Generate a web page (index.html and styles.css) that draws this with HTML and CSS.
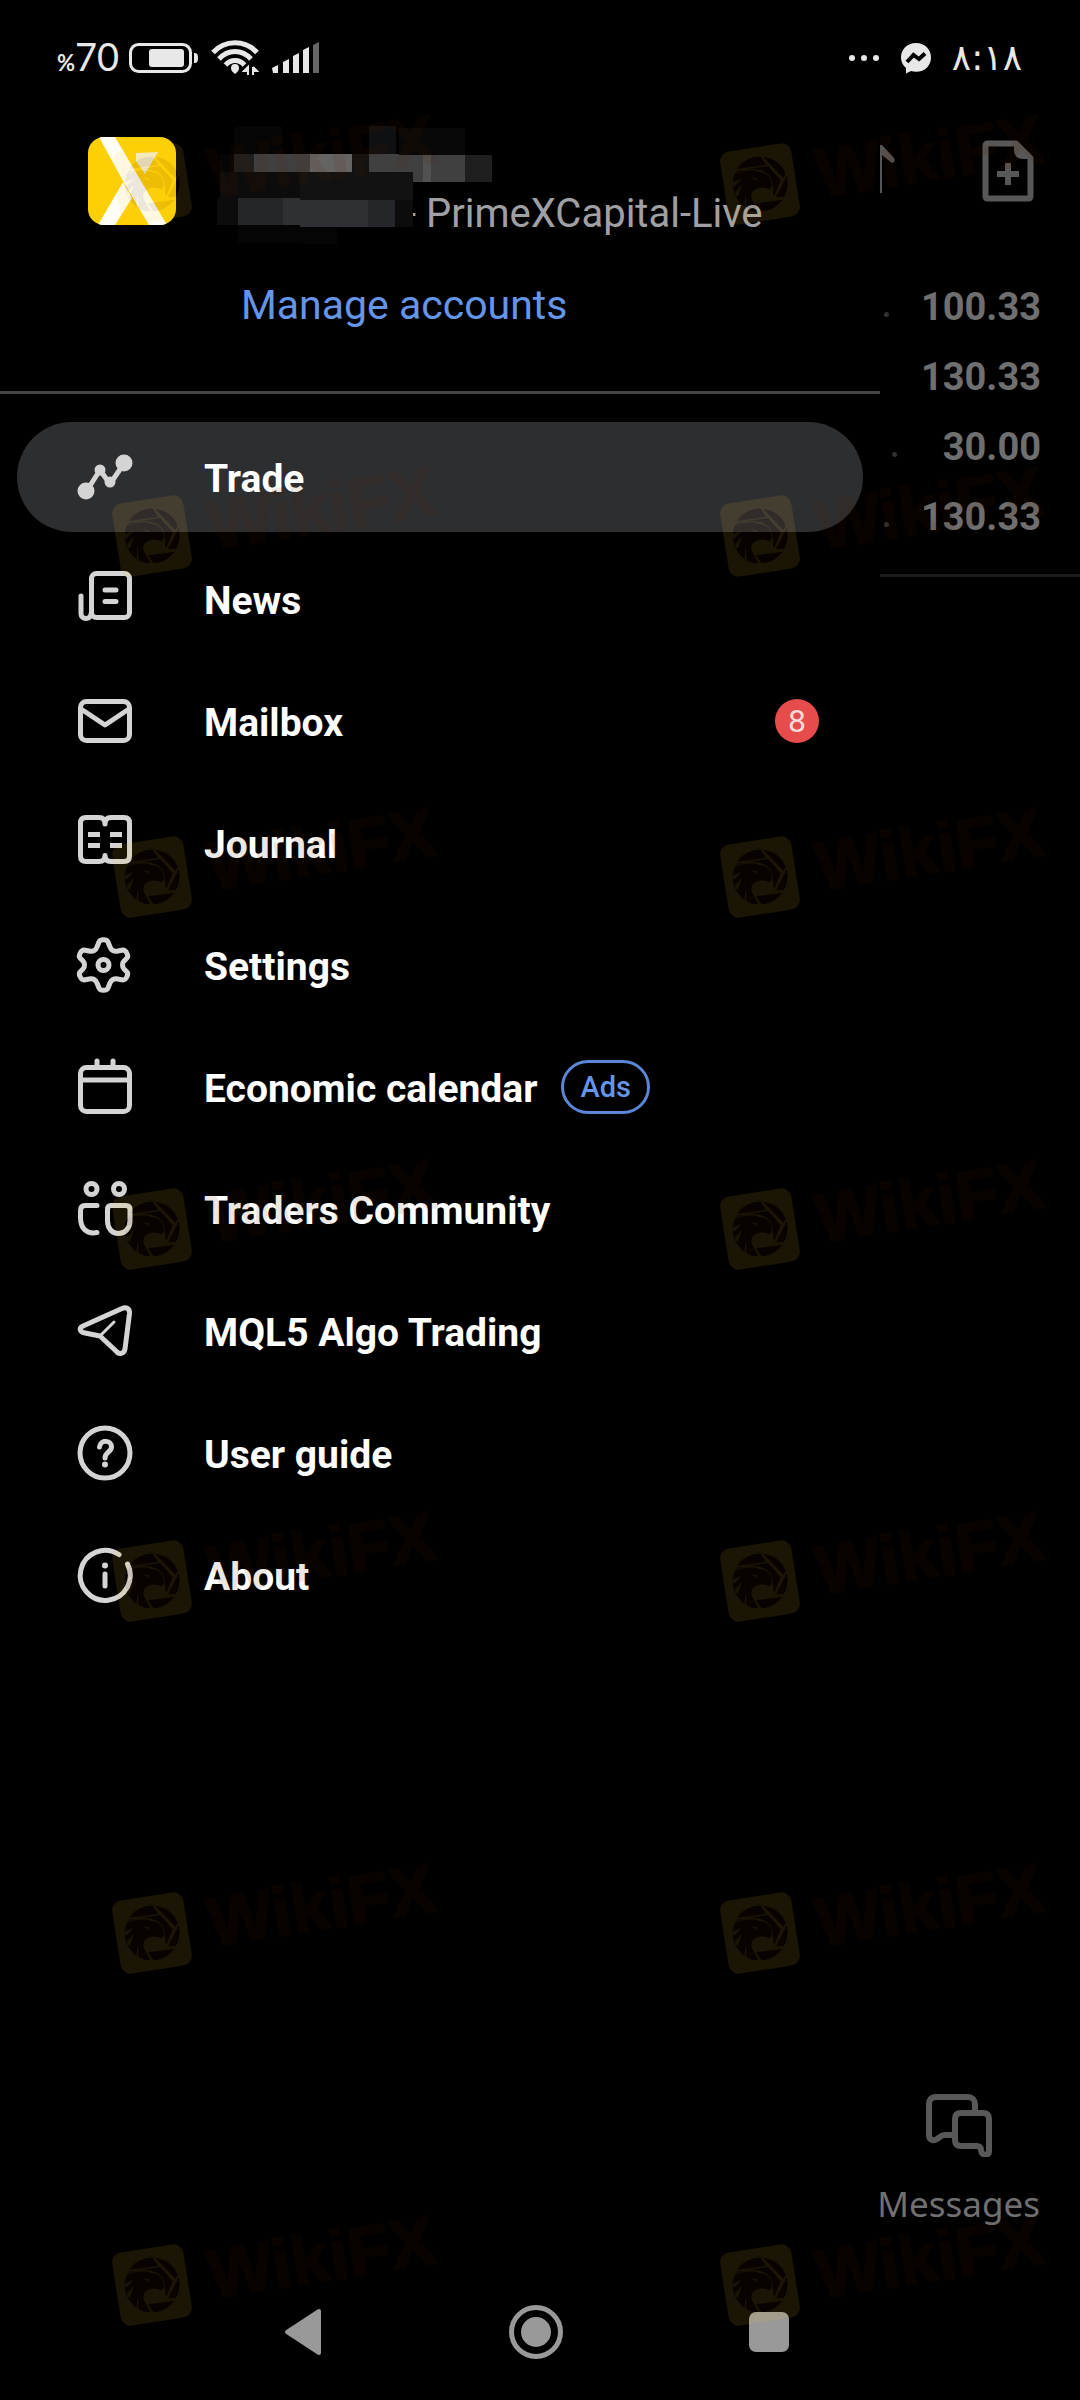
FILE: index.html
```html
<!DOCTYPE html>
<html lang="en">
<head>
<meta charset="utf-8">
<meta name="viewport" content="width=device-width, initial-scale=1">
<title>Trade</title>
<link rel="stylesheet" href="styles.css">
</head>
<body>
<header class="status">
  <div class="status-group">
    <span class="battery-level"><span class="percent">%</span>70</span>
    <svg class="battery" width="70" height="32" viewBox="0 0 70 32" aria-hidden="true">
      <rect x="2.500" y="2.500" width="60" height="27" rx="8" fill="none" stroke="#e8e8e8" stroke-width="3"/>
      <rect x="21" y="7" width="35" height="18" rx="3" fill="#e8e8e8"/>
      <path d="M66 11c3 0 4 1 4 5s-1 5-4 5z" fill="#e8e8e8"/>
    </svg>
    <svg class="wifi" width="48" height="36" viewBox="0 0 48 36" aria-hidden="true">
      <g fill="none" stroke="#e8e8e8" stroke-width="5">
        <path d="M2 12.500C14-.5 34-.5 46 12.500"/><path d="M8 19C17 9 31 9 40 19"/><path d="M14.500 25C20 19 28 19 33.500 25"/>
      </g>
      <path d="M24 24a4 4 0 0 1 4 4c0 3-2 4-4 6-2-2-4-3-4-6a4 4 0 0 1 4-4z" fill="#e8e8e8"/>
      <path d="M37 35V27l-4 4h4M42 27v8M42 27l4 4h-4" fill="#e8e8e8" stroke="#e8e8e8" stroke-width="2"/>
    </svg>
    <svg class="signal" width="48" height="32" viewBox="0 0 48 32" aria-hidden="true">
      <g fill="#e8e8e8"><path d="M0 26l6-3v8H1z"/><path d="M11 20l6-3v14h-6z"/><path d="M21 14l6-3v20h-6z"/><path d="M31 8l6-3v26h-6z"/></g>
      <path d="M41 3l6-3v31h-6z" fill="#666"/>
    </svg>
  </div>
  <div class="status-group status-right">
    <svg width="32" height="8" viewBox="0 0 32 8" aria-hidden="true"><g fill="#e8e8e8"><circle cx="4" cy="4" r="3"/><circle cx="16" cy="4" r="3"/><circle cx="28" cy="4" r="3"/></g></svg>
    <svg width="32" height="32" viewBox="0 0 32 32" aria-hidden="true">
      <path d="M16 1C7 1 1 7.500 1 15.500c0 4.500 2 8 5 10.500v5.500l5-2.500c1.500.5 3.500.8 5 .8 9 0 15-6.300 15-14.300S25 1 16 1z" fill="#e8e8e8"/>
      <path d="M7 20l6.500-7 5.500 4 6-5.500" fill="none" stroke="#000" stroke-width="4"/>
    </svg>
    <time class="clock">٨:١٨</time>
  </div>
</header>

<main class="stage">
  <aside class="drawer">
    <div class="account">
      <svg class="account-logo" width="88" height="88" viewBox="0 0 88 88" role="img" aria-label="Account logo">
        <defs><clipPath id="round"><rect width="88" height="88" rx="16"/></clipPath></defs>
        <g clip-path="url(#round)">
          <rect width="88" height="88" fill="#fdd006"/>
          <path d="M11 0h16l52 88H61L35 44z" fill="#fffef6"/>
          <path d="M35 45l9 16-17 27H10z" fill="#fffef6"/>
          <path d="M48 16l22-1-13 22-9-13z" fill="#f4eccb"/>
        </g>
      </svg>
      <div class="account-info">
        <p class="server">- PrimeXCapital-Live</p>
        <svg class="redaction" width="280" height="120" viewBox="0 0 280 120" aria-hidden="true" shape-rendering="crispEdges">
          <path fill="#050505" d="M17 0h48v28H17zM3 28h14v18H3z"/>
          <path fill="#0f1011" d="M152 0h27v28h-27z"/>
          <path fill="#080808" d="M182 2h66v28h-66z"/>
          <path fill="#1e1e1e" d="M17 28h20v18H17zM248 29h27v27h-27z"/>
          <path fill="#404041" d="M37 28h56v18H37zM152 28h30v19h-30zM182 29h66v27h-66z"/>
          <path fill="#656463" d="M93 28h42v18H93z"/>
          <path fill="#515151" d="M206 29h8v27h-8z"/>
          <path fill="#121212" d="M135 28h17v19h-17zM83 46h113v28H83z"/>
          <path fill="#0c0c0c" d="M3 46h80v26H3zM0 72h21v27H0zM178 74h18v27h-18z"/>
          <path fill="#252629" d="M21 72h45v27H21zM151 74h27v27h-27z"/>
          <path fill="#2f3034" d="M66 72h17v27H66zM83 74h68v27H83z"/>
          <path fill="#050506" d="M21 99h62v18H21zM83 101h37v17H83z"/>
        </svg>
      </div>
    </div>
    <a class="manage" href="#accounts">Manage accounts</a>

    <nav class="menu">
      <a class="item item-active" href="#trade">
        <svg class="icon" viewBox="0 0 64 64"><path d="M13 47L27 25 37 39 52 17"/><g class="solid"><circle cx="13" cy="46" r="8.500"/><circle cx="27" cy="25" r="5.500"/><circle cx="37" cy="37" r="5.500"/><circle cx="51" cy="18" r="8.500"/></g></svg>
        <span class="label">Trade</span></a>
      <a class="item" href="#news">
        <svg class="icon" viewBox="0 0 64 64"><rect x="18.500" y="6.500" width="38" height="44" rx="5"/><path d="M8 29v18c0 6 10 6 10 0M32 23h11M32 34.500h11"/></svg>
        <span class="label">News</span></a>
      <a class="item" href="#mailbox">
        <svg class="icon" viewBox="0 0 64 64"><rect x="7.500" y="12.500" width="49" height="39" rx="6"/><path d="M8 20l24 16 24-16"/></svg>
        <span class="label">Mailbox</span><span class="badge">8</span></a>
      <a class="item" href="#journal">
        <svg class="icon" viewBox="0 0 64 64"><path d="M32 13c0-4-2-6.500-6-6.500H13c-4 0-5.500 2-5.500 5.500v33c0 4 2 5.500 5.500 5.500h13c4 0 6-2 6-6 0 4 2 6 6 6h13c4 0 5.500-2 5.500-5.500V12c0-4-2-5.500-5.500-5.500H38c-4 0-6 2.500-6 6.500z"/><path class="butt" d="M15 23.500h12M37 23.500h12M15 34.500h12M37 34.500h12"/></svg>
        <span class="label">Journal</span></a>
      <a class="item" href="#settings">
        <svg class="icon" viewBox="0 0 64 64"><path d="M26 9c1-3 8-3 9 0l2 5c1 3 4 5 8 4l5-1c3 0 6 6 4 8l-3 3c-2 2-2 6 0 8l3 3c2 2-1 8-4 8l-5-1c-4-1-7 1-8 4l-2 5c-1 3-8 3-9 0l-2-5c-1-3-4-5-8-4l-5 1c-3 0-6-6-4-8l3-3c2-2 2-6 0-8l-3-3c-2-2 1-8 4-8l5 1c4 1 7-1 8-4z"/><circle cx="30.500" cy="32" r="5.500"/></svg>
        <span class="label">Settings</span></a>
      <a class="item" href="#calendar">
        <svg class="icon" viewBox="0 0 64 64"><rect x="7.500" y="12.500" width="49" height="44" rx="6"/><path d="M8 25h48M24 6v6M40 6v6"/></svg>
        <span class="label">Economic calendar</span><span class="tag">Ads</span></a>
      <a class="item" href="#community">
        <svg class="icon" viewBox="0 0 64 64"><circle cx="18.500" cy="12" r="5.500"/><circle cx="46" cy="12" r="5.500"/><path d="M24 28.500H12c-3 0-4.500 2-4.500 5v7c0 11 6 17 16.500 15M38 28.500h15c2.500 0 4 1.500 4 4v11c0 8-5 13-11.500 13s-11-5-11-13v-11c0-2.500 1-4 3.500-4z"/></svg>
        <span class="label">Traders Community</span></a>
      <a class="item" href="#algo">
        <svg class="icon" viewBox="0 0 64 64"><path d="M10 27L49 9.500c4-2 8 0 7.500 5L52 50c-1 5-6 6-9 2L27 37l-15-3c-6-1-6-5-2-7z"/><path class="thin" d="M27 37l14-14"/></svg>
        <span class="label">MQL5 Algo Trading</span></a>
      <a class="item" href="#guide">
        <svg class="icon" viewBox="0 0 64 64"><circle cx="32" cy="32" r="25"/><path d="M26.500 26c1-8 12-7 12 0 0 5-6.500 5-6.500 11"/><circle class="solid" cx="32" cy="43.500" r="3"/></svg>
        <span class="label">User guide</span></a>
      <a class="item" href="#about">
        <svg class="icon" viewBox="0 0 64 64"><path d="M46 11.500A25 25 0 1 0 54.500 21"/><path d="M32 31v12"/><circle class="solid" cx="32" cy="22.500" r="3"/></svg>
        <span class="label">About</span></a>
    </nav>
  </aside>

  <section class="behind">
    <div class="toolbar">
      <svg width="16" height="62" viewBox="0 0 16 62" aria-hidden="true"><path d="M0 5h2l12 13q2 4-2 5L2 15v38H0z" fill="#555"/></svg>
      <button class="new-order" type="button" aria-label="New order">
        <svg width="52" height="62" viewBox="0 0 52 62"><path d="M34 3.500H6Q3.500 3.500 3.500 6v50Q3.500 58.500 6 58.500h40q2.500 0 2.500-2.500V18z" fill="none" stroke="#585858" stroke-width="6" stroke-linejoin="round"/><path d="M32 3l17 16h-7c-8 0-10-4-10-10z" fill="#585858"/><path d="M26 23v22M15 34h22" stroke="#585858" stroke-width="6"/></svg>
      </button>
    </div>
    <ul class="figures">
      <li><i class="speck"></i>100.33</li>
      <li>130.33</li>
      <li><i class="speck speck-far"></i>30.00</li>
      <li><i class="speck"></i>130.33</li>
    </ul>
    <a class="tab" href="#messages">
      <svg width="68" height="64" viewBox="0 0 68 64" aria-hidden="true"><g fill="none" stroke="#585858" stroke-width="6" stroke-linejoin="round"><path d="M50 19V11c0-4-3-7-7-7H11c-5 0-7 3-7 7v31c0 6 6 6 8 4l3-2q2-2 5-2h9"/><path d="M36 20h22q6 0 6 6v33c0 4-8 4-8-2 0-3-2-4-4-4H36q-6 0-6-6V26q0-6 6-6z"/></g></svg>
      Messages</a>
  </section>
</main>

<footer class="system-nav">
  <button type="button" aria-label="Back"><svg width="40" height="54" viewBox="0 0 40 54"><path d="M4 27L36 6v42z" fill="#999" stroke="#999" stroke-width="4" stroke-linejoin="round"/></svg></button>
  <button type="button" aria-label="Home"><svg width="54" height="54" viewBox="0 0 54 54"><circle cx="27" cy="27" r="24.500" fill="none" stroke="#999" stroke-width="5"/><circle cx="27" cy="27" r="15" fill="#999"/></svg></button>
  <button type="button" aria-label="Recents"><svg width="40" height="54" viewBox="0 0 40 54"><rect y="7" width="40" height="40" rx="7" fill="#999"/></svg></button>
</footer>

<svg class="watermarks" aria-hidden="true">
  <defs>
    <g id="mark">
      <g opacity=".1">
        <rect x="-36" y="-37" width="72" height="74" rx="10" transform="rotate(-9)" fill="#ffc828"/>
        <g transform="scale(.333)">
          <circle r="82" fill="#5a1e00"/>
          <path fill="#ffc828" d="M-72-44L18-57 2-83 7-84 70-18 82-38 86-32 48 40 74 38 68 48-12 58 4 82-4 84-24 46C-34 20-10 6 14 11L30 16 36 2C34-20 20-34-2-36-24-44-60-40-76-30z"/>
          <path fill="#5a1e00" d="M-66-50A82 82 0 0 1-2-82L14-62z"/>
          <path fill="#5a1e00" d="M12-80A82 82 0 0 1 76-34L68-26z"/>
          <path fill="#5a1e00" d="M80-24A82 82 0 0 1 72 36L52 38z"/>
          <path fill="#5a1e00" d="M66 48A82 82 0 0 1 8 81L-6 59z"/>
          <path fill="#5a1e00" d="M-80-8C-60-42-20-46-2-36 20-34 35-18 36 4L28-2C16-4 8 2-4 6L18 4 22 10C-20 6-36 30-24 54L-10 82C-50 80-84 40-80-8z"/>
          <path fill="#5a1e00" d="M-70-40L24-54 62-12 46 30 40 36 38-4C32-26 20-38-2-42-24-48-50-44-72-34z"/>
          <path fill="#ffc828" d="M-26-20l20 4-8 4zM-84-4l30-12-24 24zM-76 26l22-24-14 38zM-46 70l2-44 4 48z"/>
        </g>
        <text class="watermark-text" x="57" y="23" transform="rotate(-9)">WikiFX</text>
      </g>
    </g>
  </defs>
  <use href="#mark" x="152" y="184"/><use href="#mark" x="760" y="184"/>
  <use href="#mark" x="152" y="536"/><use href="#mark" x="760" y="536"/>
  <use href="#mark" x="152" y="877"/><use href="#mark" x="760" y="877"/>
  <use href="#mark" x="152" y="1229"/><use href="#mark" x="760" y="1229"/>
  <use href="#mark" x="152" y="1581"/><use href="#mark" x="760" y="1581"/>
  <use href="#mark" x="152" y="1933"/><use href="#mark" x="760" y="1933"/>
  <use href="#mark" x="152" y="2285"/><use href="#mark" x="760" y="2285"/>
</svg>
</body>
</html>
```
FILE: styles.css
```css
* { box-sizing: border-box; }

body {
  position: relative;
  display: flex;
  flex-direction: column;
  min-height: 100vh;
  margin: 0;
  background: #000;
  color: #fff;
  font-family: Roboto, sans-serif;
}

a { color: inherit; text-decoration: none; }
button { padding: 0; border: 0; background: none; }
svg { display: block; flex: none; }

.status {
  display: flex;
  justify-content: space-between;
  align-items: center;
  height: 115px;
  padding: 0 58px 0 57px;
  color: #e8e8e8;
}
.status-group { display: flex; align-items: center; gap: 13px; }
.status-right { gap: 20px; }
.battery-level { padding-top: 4px; font: 38px/48px Lato, sans-serif; }
.percent { font-size: 22px; font-weight: 700; }
.battery { margin-left: -4px; }
.clock { font: 36px/48px "DejaVu Sans", sans-serif; }

.stage { display: flex; flex: 1; }

.drawer { flex: 1; padding-top: 22px; }
.account { display: flex; gap: 41px; padding-left: 88px; }
.account-info { position: relative; padding: 55px 0 0 188px; }
.server {
  margin: 0;
  color: #a0a0a4;
  font-size: 40px;
  line-height: 44px;
}
.redaction { position: absolute; top: -11px; left: 0; }
.manage {
  display: block;
  padding: 45px 0 62px 241px;
  border-bottom: 3px solid #444445;
  color: #6495e8;
  font-size: 41px;
  line-height: 48px;
}

.menu {
  display: flex;
  flex-direction: column;
  gap: 12px;
  padding: 28px 17px 0;
}
.item {
  display: flex;
  align-items: center;
  height: 110px;
  padding: 0 44px 0 56px;
  border-radius: 55px;
  font-size: 39px;
  font-weight: 700;
  line-height: 48px;
}
.item-active { background: #2d2e30; }
.label { padding-top: 3px; }
.icon {
  width: 64px;
  height: 64px;
  margin-right: 67px;
  fill: none;
  stroke: #d4d4d4;
  stroke-width: 5;
  stroke-linecap: round;
  stroke-linejoin: round;
}
.solid { fill: #d4d4d4; stroke: none; }
.butt { stroke-linecap: butt; }
.thin { stroke-width: 3; }
.badge {
  width: 44px;
  margin-left: auto;
  border-radius: 22px;
  background: #e64c4c;
  color: #fbdada;
  font-size: 32px;
  font-weight: 400;
  line-height: 44px;
  text-align: center;
}
.tag {
  margin-left: 24px;
  padding: 0 16px;
  border: 3px solid #5b86d8;
  border-radius: 27px;
  color: #6495e8;
  font-size: 29px;
  font-weight: 500;
  line-height: 48px;
}

.behind {
  display: flex;
  flex-direction: column;
  width: 200px;
  padding-top: 25px;
}
.toolbar { display: flex; justify-content: space-between; padding-right: 46px; }
.figures {
  margin: 0;
  padding: 70px 39px 22px 0;
  border-bottom: 3px solid #1c1c1c;
  color: #6f6f6f;
  font-size: 38px;
  font-weight: 700;
  line-height: 70px;
  text-align: right;
  list-style: none;
}
.figures li { display: flex; justify-content: flex-end; align-items: center; }
.speck {
  width: 5px;
  height: 5px;
  margin: 14px auto 0 4px;
  border-radius: 50%;
  background: #303030;
}
.speck-far { margin-left: 12px; }
.tab {
  display: flex;
  flex-direction: column;
  align-items: center;
  align-self: flex-end;
  gap: 20px;
  margin-top: auto;
  padding: 0 40px 33px 0;
  color: #707070;
  font: 35px/54px "Noto Sans", sans-serif;
}

.system-nav {
  display: flex;
  justify-content: center;
  align-items: center;
  gap: 186px;
  height: 136px;
  padding-right: 8px;
}

.watermarks {
  position: absolute;
  inset: 0;
  width: 100%;
  height: 100%;
  pointer-events: none;
}
.watermark-text {
  fill: #5a1e00;
  stroke: #5a1e00;
  stroke-width: 2;
  stroke-linejoin: round;
  font: 700 69px "Liberation Sans", sans-serif;
}
```
